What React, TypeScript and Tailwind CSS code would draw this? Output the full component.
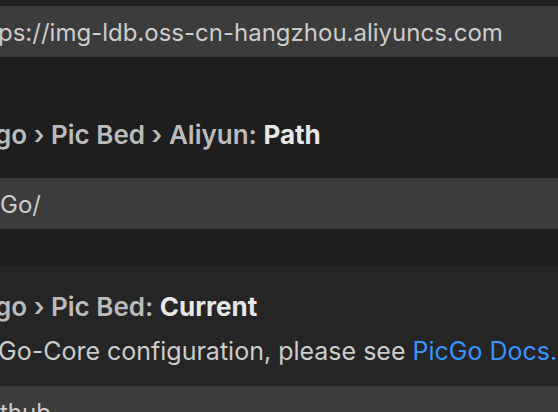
const Title = ({ crumbs, name }: { crumbs: string; name: string }) => (
  <div className="h-[30px] leading-[30px] text-[26px] font-semibold whitespace-nowrap">
    <span className="text-[#bbbbbb]">{crumbs}</span>
    <span className="text-[#e7e7e7] font-bold">{name}</span>
  </div>
)

const Input = ({ value }: { value: string }) => (
  <div className="h-[51px] bg-[#3c3c3c] flex items-center pt-[2px] text-[24px] text-[#cccccc] whitespace-nowrap">
    {value}
  </div>
)

export default function App() {
  return (
    <div className="w-[558px] h-[412px] overflow-hidden font-['Inter',sans-serif]">
      <div className="h-[266px] bg-[#1e1e1e] pt-[6px]">
        <div className="-ml-[2px]">
          <Input value="ps://img-ldb.oss-cn-hangzhou.aliyuncs.com" />
        </div>
        <div className="mt-[63px] -ml-[5px]">
          <Title crumbs="go › Pic Bed › Aliyun: " name="Path" />
        </div>
        <div className="mt-[28px]">
          <Input value="Go/" />
        </div>
      </div>
      <div className="h-[146px] bg-[#252526] pt-[26px]">
        <div className="-ml-[5px]">
          <Title crumbs="go › Pic Bed: " name="Current" />
        </div>
        <div className="mt-[14px] -ml-[2px] h-[30px] leading-[30px] text-[25px] text-[#cccccc] whitespace-nowrap">
          Go-Core configuration, please see <span className="text-[#3794ff]">PicGo Docs.</span>
        </div>
        <div className="mt-[20px]">
          <Input value="thub" />
        </div>
      </div>
    </div>
  )
}
